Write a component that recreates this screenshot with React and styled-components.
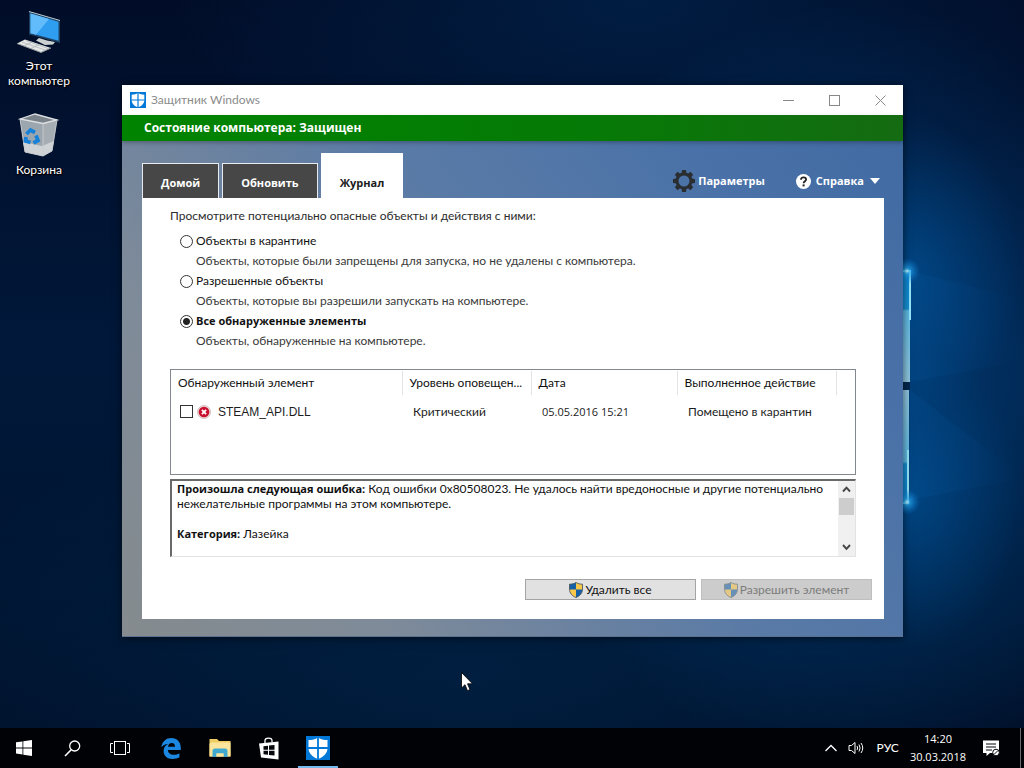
import { useState } from "react"
import styled, { createGlobalStyle, css } from "styled-components"

const GlobalStyle = createGlobalStyle`
    *{
        box-sizing: border-box;
    }
    body{
        margin: 0;
        font-family: Lato, "Noto Sans", sans-serif;
        font-size: 12px;
        line-height: 16px;
        color: #1c1c1c;
    }
    p, h1, h2{
        margin: 0;
        font-size: inherit;
        font-weight: inherit;
    }
    button{
        font: inherit;
        color: inherit;
        margin: 0;
        padding: 0;
        border: none;
        background: none;
    }
    svg{
        display: block;
        flex: none;
    }
`

const smallText = css`
    font-family: "Open Sans", "Noto Sans", sans-serif;
    font-size: 11px;
`

const Screen = styled.div`
    position: relative;
    min-height: 100vh;
    display: flex;
    flex-direction: column;
    overflow: hidden;
    background:
        radial-gradient(ellipse 110px 150px at 89% 35%, rgba(0,112,200,0.34), transparent),
        radial-gradient(ellipse 110px 150px at 89% 65%, rgba(0,112,200,0.34), transparent),
        radial-gradient(ellipse 360px 380px at 84% 50%, rgba(0,76,144,0.66), transparent),
        radial-gradient(ellipse 460px 200px at 62% 0%, rgba(0,40,84,0.6), transparent),
        radial-gradient(ellipse 620px 260px at 46% 88%, rgba(0,42,82,0.5), transparent),
        linear-gradient(180deg, #010d28 0%, #01183a 45%, #001531 80%, #010f28 100%);
`

const Wallpaper = styled.svg`
    position: absolute;
    inset: 0;
    width: 100%;
    height: 100%;
`

const Desktop = styled.main`
    position: relative;
    flex: 1;
    display: flex;
    align-items: flex-start;
`

const Shortcuts = styled.nav`
    width: 122px;
    display: flex;
    flex-direction: column;
    gap: 24px;
    padding: 8px 45px 0 1px;
`

const Shortcut = styled.a`
    display: flex;
    flex-direction: column;
    align-items: center;
    gap: 2px;
    color: #fff;
    line-height: 15px;
    text-align: center;
    text-decoration: none;
    text-shadow: 0 1px 2px #000, 1px 1px 1px #000;
`

const WindowFrame = styled.section`
    flex: 1;
    min-width: 0;
    margin: 85px 121px 24px 0;
    border-bottom: 1px solid #5a7190;
    background: linear-gradient(53deg, #858b8e 0%, #7f8b99 22%, #5b7ba6 52%, #4a72a8 78%, #4069a2 100%);
    box-shadow: 0 1px 8px rgba(0,0,0,0.6);
`

const TitleBar = styled.header`
    height: 30px;
    display: flex;
    align-items: center;
    padding-left: 8px;
    background: #fff;
    color: #8b8b8b;
    h1{
        flex: 1;
        padding-left: 5px;
    }
`

const CaptionButton = styled.button`
    width: 46px;
    height: 30px;
    display: flex;
    align-items: center;
    justify-content: center;
`

const StatusBar = styled.h2`
    height: 26px;
    padding: 0 22px;
    font-family: "Open Sans", "Noto Sans", sans-serif;
    line-height: 26px;
    font-weight: 700;
    color: #fff;
    background: linear-gradient(90deg, #008400 0%, #067a06 60%, #156b12 100%);
    box-shadow: 0 2px 4px rgba(0,0,0,0.25);
`

const WindowBody = styled.div`
    padding: 12px 19px 17px 20px;
`

const TopRow = styled.div`
    display: flex;
    justify-content: space-between;
`

const Tabs = styled.div`
    display: flex;
    align-items: flex-end;
    gap: 3px;
    height: 45px;
`

const Tab = styled.button`
    ${smallText}
    height: 35px;
    padding: 3px 18px 0;
    border: 1px solid #e8ecf0;
    border-bottom: none;
    background: #474747;
    color: #fff;
    font-weight: 700;
    ${props => props.$active && css`
        height: 45px;
        padding-top: 13px;
        border-color: #fff;
        border-radius: 1px 1px 0 0;
        background: #fff;
        color: #1c1c1c;
    `}
`

const Links = styled.div`
    display: flex;
    align-items: center;
    gap: 31px;
    padding: 11px 4px 0 0;
`

const LinkButton = styled.button`
    ${smallText}
    display: flex;
    align-items: center;
    gap: ${props => props.$gap}px;
    font-weight: 700;
    color: #fff;
`

const Panel = styled.div`
    padding: 10px 12px 19px 28px;
    background: #fff;
`

const Inner = styled.div`
    margin-right: 16px;
`

const Options = styled.fieldset`
    margin: 0 0 18px;
    padding: 0;
    border: none;
    legend{
        padding: 0;
        margin-bottom: 7px;
        color: #2c2c2c;
    }
`

const Option = styled.label`
    display: grid;
    grid-template-columns: 13px 1fr;
    column-gap: 3px;
    align-items: center;
    padding-left: 10px;
    line-height: 20px;
    color: #111;
    ${props => props.$checked && css`
        ${smallText}
        font-weight: 700;
    `}
`

const Hint = styled.small`
    grid-column: 2;
    font-family: Lato, "Noto Sans", sans-serif;
    font-size: 12px;
    font-weight: 400;
    color: #3a3a3a;
`

const Radio = styled.input`
    appearance: none;
    width: 13px;
    height: 13px;
    margin: 0;
    border: 1px solid #333;
    border-radius: 50%;
    background: #fff;
    &:checked{
        background: radial-gradient(circle, #222 3px, #fff 4px);
    }
`

const ListBox = styled.div`
    height: 106px;
    border: 1px solid #828790;
    padding-top: 1px;
    overflow: hidden;
`

const Table = styled.table`
    width: 100%;
    table-layout: fixed;
    border-collapse: collapse;
    th, td{
        padding: 0 7px;
        text-align: left;
        font-weight: 400;
        white-space: nowrap;
    }
    th{
        height: 24px;
        padding-right: 4px;
        border-right: 1px solid #e3e3e3;
        color: #111;
    }
    th:last-child{
        border: none;
    }
    td{
        height: 33px;
        padding-left: 11px;
    }
    td:first-child{
        padding-left: 9px;
    }
`

const DateText = styled.time`
    ${smallText}
`

const Item = styled.label`
    display: flex;
    align-items: center;
    gap: 4px;
    font-family: "Liberation Sans", Arial, sans-serif;
    span{
        padding-left: 3px;
    }
`

const CheckBox = styled.input`
    appearance: none;
    width: 13px;
    height: 13px;
    margin: 0;
    border: 1px solid #333;
    background: #fff;
    &:checked{
        background: #333;
        box-shadow: inset 0 0 0 2px #fff;
    }
`

const Details = styled.div`
    display: flex;
    height: 78px;
    margin-top: 4px;
    border: 1px solid #e3e3e3;
    border-top: 2px solid #696969;
    border-left: 2px solid #696969;
`

const DetailsText = styled.div`
    flex: 1;
    padding: 0 8px 0 5px;
    line-height: 15px;
    color: #111;
    p + p{
        margin-top: 15px;
    }
    b{
        ${smallText}
        line-height: 14px;
    }
`

const ScrollBar = styled.div`
    width: 17px;
    display: flex;
    flex-direction: column;
    background: #f0f0f0;
`

const ScrollButton = styled.button`
    height: 17px;
    display: flex;
    align-items: center;
    justify-content: center;
`

const Thumb = styled.div`
    height: 17px;
    margin: 0 1px auto;
    background: #cdcdcd;
`

const Actions = styled.div`
    display: flex;
    justify-content: flex-end;
    gap: 5px;
    margin-top: 22px;
`

const ActionButton = styled.button`
    width: 171px;
    height: 21px;
    display: flex;
    align-items: center;
    justify-content: center;
    gap: 2px;
    border: 1px solid #a4a4a4;
    background: #e1e1e1;
    color: #111;
    &:disabled{
        border-color: #bfbfbf;
        background: #cccccc;
        color: #7c7c7c;
    }
    &:disabled svg{
        opacity: 0.55;
    }
`

const TaskBar = styled.footer`
    position: relative;
    height: 40px;
    display: flex;
    justify-content: space-between;
    background: #010205;
    color: #fff;
`

const TaskGroup = styled.div`
    display: flex;
`

const TaskButton = styled.button`
    width: 49px;
    height: 40px;
    display: flex;
    align-items: center;
    justify-content: center;
    ${props => props.$system && css`
        width: 48px;
    `}
    ${props => props.$active && css`
        background: linear-gradient(#76b9ed, #76b9ed) center bottom / 40px 2px no-repeat;
    `}
`

const PinnedApps = styled(TaskGroup)`
    flex: 1;
    padding-left: 2px;
`

const Tray = styled.div`
    display: flex;
    align-items: center;
    gap: 11px;
    padding-right: 3px;
`

const Clock = styled.time`
    ${smallText}
    padding-right: 6px;
    line-height: 18px;
    text-align: center;
`

const TrayButton = styled.button`
    display: flex;
    align-items: center;
`

const ShowDesktop = styled.button`
    width: 1px;
    height: 40px;
    margin-left: 9px;
    background: #6b6b6b;
`

const DefenderIcon = ({ size }) => (
    <svg width={size} height={size} viewBox="0 0 24 24" aria-hidden="true">
        <rect width="24" height="24" fill="#0078d7"/>
        <path d="M12 1.500C9.300 3.400 6 4 2.500 4V12C2.500 17.500 6.500 21 12 23C17.500 21 21.500 17.500 21.500 12V4C18 4 14.700 3.400 12 1.500Z" fill="#fff"/>
        <path d="M12 1V24M2 12H22" stroke="#0078d7" strokeWidth="1.800"/>
    </svg>
)

const ComputerIcon = () => (
    <svg width="44" height="48" viewBox="0 0 44 48" aria-hidden="true">
        <path d="M22 30L30 32.500L38 34L36 36.500L28 37L19 32.500Z" fill="#cbd0d0"/>
        <path d="M12 3.500L43 12.500V35L12 26.500Z" fill="#1d3f5d"/>
        <path d="M12 3.500L43 12.500" stroke="#bccbd6"/>
        <path d="M13.500 5.500L41.500 13.700V32.800L13.500 25.300Z" fill="#2f9df0"/>
        <path d="M13.500 5.500L32 10.900L19 26.800L13.500 25.300Z" fill="#62bbfa"/>
        <path d="M0 35.500L8 31.500L34 40L24 44.500Z" fill="#e6e8e8"/>
        <path d="M0 35.500L24 44.500L34 40" stroke="#8b9296" fill="none"/>
        <path d="M5 34.200L29 42.300M9 32.600L31 40.500M7 38L15 34M14 40.500L22 36.500" stroke="#a9afb2" strokeWidth="0.700"/>
    </svg>
)

const BinIcon = () => (
    <svg width="42" height="48" viewBox="0 0 42 48" aria-hidden="true">
        <path d="M2 7L39 9L34 39L25 44L7 40Z" fill="#a6adb3"/>
        <path d="M2 7L25 11L25 44L7 40Z" fill="#9ca6ae"/>
        <path d="M5 30L24 34L36 29L34 39L25 44L7 40Z" fill="#d0d3d5"/>
        <path d="M2 7L17 2L39 8L25 11.500Z" fill="#7b838a" stroke="#dde0e2" strokeWidth="1.300"/>
        <path d="M2 7L7 40L25 44L34 39L39 8M25 11.500V44" fill="none" stroke="#c8cdd0" strokeWidth="0.900"/>
        <g fill="none" stroke="#1681d8" strokeWidth="3.800">
            <path d="M8.500 22L12.500 18L17 20.500"/>
            <path d="M18 23.500L20 28.500L15.500 31"/>
            <path d="M12.500 30.500L7.500 29L8 25"/>
        </g>
    </svg>
)

const GearIcon = () => (
    <svg width="22" height="22" viewBox="0 0 22 22" aria-hidden="true">
        <circle cx="11" cy="11" r="7" fill="none" stroke="#2b2e31" strokeWidth="3"/>
        {[0, 45, 90, 135, 180, 225, 270, 315].map(a => (
            <path key={a} d="M8.600 3.500L9 0H13L13.400 3.500Z" fill="#2b2e31" transform={`rotate(${a} 11 11)`}/>
        ))}
    </svg>
)

const HelpIcon = () => (
    <svg width="15" height="15" viewBox="0 0 15 15" aria-hidden="true">
        <circle cx="7.500" cy="7.500" r="7.500" fill="#fff"/>
        <path d="M5 5.700C5 4 6 3.300 7.500 3.300S10.100 4.100 10.100 5.500C10.100 7.200 7.600 7.300 7.600 9.300" fill="none" stroke="#222" strokeWidth="1.800"/>
        <rect x="6.600" y="10.400" width="2" height="2" fill="#222"/>
    </svg>
)

const ErrorIcon = () => (
    <svg width="14" height="14" viewBox="0 0 14 14" aria-hidden="true">
        <circle cx="7" cy="7" r="6.500" fill="#f1d6d6" stroke="#c9b0b0" strokeWidth="0.700"/>
        <circle cx="7" cy="7" r="5.300" fill="#c8102e"/>
        <path d="M4.900 4.900L9.100 9.100M9.100 4.900L4.900 9.100" stroke="#fff" strokeWidth="1.800"/>
    </svg>
)

const UacIcon = () => (
    <svg width="14" height="16" viewBox="0 0 14 16" aria-hidden="true">
        <path d="M7 0.500C5 1.800 3 2.200 0.500 2.200V7C0.500 11 3 14 7 15.500C11 14 13.500 11 13.500 7V2.200C11 2.200 9 1.800 7 0.500Z" fill="#f9c74a"/>
        <path d="M7 0.500C5 1.800 3 2.200 0.500 2.200V7.500H7Z" fill="#1660a8"/>
        <path d="M7 7.500H13.500C13.300 11.200 11 14 7 15.500Z" fill="#1660a8"/>
        <path d="M7 0.500C5 1.800 3 2.200 0.500 2.200V7C0.500 11 3 14 7 15.500C11 14 13.500 11 13.500 7V2.200C11 2.200 9 1.800 7 0.500Z" fill="none" stroke="#4c5a66" strokeWidth="0.900"/>
    </svg>
)

const Chevron = ({ down }) => (
    <svg width="9" height="7" viewBox="0 0 9 7" aria-hidden="true">
        <path d={down ? "M1 1L4.500 4.800L8 1" : "M1 5.500L4.500 1.700L8 5.500"} fill="none" stroke="#444" strokeWidth="1.900"/>
    </svg>
)

const StartIcon = () => (
    <svg width="16" height="16" viewBox="0 0 16 16" fill="#fff" aria-hidden="true">
        <path d="M0 2.300L6.500 1.400V7.500H0ZM7.300 1.300L16 0V7.500H7.300ZM0 8.400H6.500V14.500L0 13.600ZM7.300 8.400H16V16L7.300 14.700Z"/>
    </svg>
)

const SearchIcon = () => (
    <svg width="17" height="17" viewBox="0 0 17 17" fill="none" stroke="#fff" aria-hidden="true">
        <circle cx="10.700" cy="6" r="5" strokeWidth="1.300"/>
        <path d="M7.200 9.700L1 16" strokeWidth="1.600"/>
    </svg>
)

const TaskViewIcon = () => (
    <svg width="20" height="14" viewBox="0 0 20 14" fill="none" stroke="#fff" aria-hidden="true">
        <rect x="4.500" y="0.500" width="11" height="13"/>
        <path d="M3 2.500H0.500V11.500H3M17 2.500H19.500V11.500H17"/>
    </svg>
)

const EdgeIcon = () => (
    <svg width="20" height="21" viewBox="0 0 20 21" aria-hidden="true">
        <path d="M0.300 9.300C1.200 3.300 5.300 0 10.300 0C16 0 19.800 4 19.800 9.700V12H6.900C7 15 9.400 16.800 12.700 16.800C14.900 16.800 16.700 16.200 18.400 15.200V19.300C16.500 20.400 14.300 21 11.700 21C6 21 2.600 17.700 2.600 13C2.600 9.900 4.200 7.400 7 6C4.100 6.300 1.800 7.400 0.300 9.300ZM7 8.700H14C14 6.300 12.900 4.900 10.700 4.900C8.600 4.900 7.300 6.400 7 8.700Z" fill="#1b87e0"/>
    </svg>
)

const FolderIcon = () => (
    <svg width="22" height="20" viewBox="0 0 22 20" aria-hidden="true">
        <path d="M0.500 1H8L10 3H21.500V18.500H0.500Z" fill="#f0cd62"/>
        <path d="M1.500 4.500H21.500V18.500H0.500V6Z" fill="#fbe49c"/>
        <path d="M3.500 19V13Q3.500 10.500 6 10.500H16Q18.500 10.500 18.500 13V19H14.500V15.500H7.500V19Z" fill="#3fa9d0"/>
        <path d="M7.500 15.500H14.500V18.500H7.500Z" fill="#fbe49c"/>
    </svg>
)

const StoreIcon = () => (
    <svg width="20" height="23" viewBox="0 0 20 23" aria-hidden="true">
        <path d="M6 6V3.500C6 0.500 13 0 13 3.500V5" fill="none" stroke="#fff" strokeWidth="1.300"/>
        <path d="M0 6.500L19.500 4.500V22.500L2 20.500Z" fill="#fff"/>
        <path d="M4.500 9.200L9 8.700V12.700H4.500ZM10 8.600L15.500 8V12.700H10ZM4.500 13.700H9V17.800L4.500 17.300ZM10 13.700H15.500V18.500L10 17.900Z" fill="#06080c"/>
    </svg>
)

const SpeakerIcon = () => (
    <svg width="17" height="14" viewBox="0 0 17 14" fill="none" stroke="#fff" aria-hidden="true">
        <path d="M1 4.500H3.500L7 1.500V12.500L3.500 9.500H1Z"/>
        <path d="M9 5Q10.300 7 9 9M11 3.500Q13.200 7 11 10.500M13 2Q16.500 7 13 12"/>
    </svg>
)

const NoticeIcon = () => (
    <svg width="17" height="17" viewBox="0 0 17 17" aria-hidden="true">
        <path d="M0 0.500H16V13H7L3.500 16V13H0Z" fill="#fff"/>
        <path d="M3 4H13M3 7H13M3 10H9" stroke="#05070b" strokeWidth="1.200"/>
        <circle cx="13" cy="12.500" r="3.300" fill="#fff" stroke="#05070b"/>
        <path d="M11 14.500L15 10.500" stroke="#05070b"/>
    </svg>
)

const Cursor = styled.svg`
    position: absolute;
    left: 45%;
    bottom: 76px;
`

const options = [
    { id: "quarantine", title: "Объекты в карантине", text: "Объекты, которые были запрещены для запуска, но не удалены с компьютера." },
    { id: "allowed", title: "Разрешенные объекты", text: "Объекты, которые вы разрешили запускать на компьютере." },
    { id: "all", title: "Все обнаруженные элементы", text: "Объекты, обнаруженные на компьютере." },
]

const tabs = ["Домой", "Обновить", "Журнал"]

function Backdrop() {
    return (
        <Wallpaper viewBox="0 0 1024 768" preserveAspectRatio="xMidYMid slice" aria-hidden="true">
            <defs>
                <linearGradient id="beam" x1="0" x2="1">
                    <stop offset="0" stopColor="#0b75cc" stopOpacity="0.100"/>
                    <stop offset="1" stopColor="#0b75cc" stopOpacity="0"/>
                </linearGradient>
                <linearGradient id="pane" x1="0" x2="0" y1="0" y2="1">
                    <stop offset="0" stopColor="#0a84d0"/>
                    <stop offset="0.340" stopColor="#168fd2"/>
                    <stop offset="0.360" stopColor="#5cb8e2"/>
                    <stop offset="1" stopColor="#8fc4dc"/>
                </linearGradient>
                <radialGradient id="flare">
                    <stop offset="0" stopColor="#b9f4ff"/>
                    <stop offset="0.250" stopColor="#25a9f0" stopOpacity="0.700"/>
                    <stop offset="1" stopColor="#0b75cc" stopOpacity="0"/>
                </radialGradient>
            </defs>
            <path d="M910 271L1024 300V360L910 382Z" fill="url(#beam)"/>
            <path d="M910 390L1024 478L910 500Z" fill="url(#beam)"/>
            <rect x="890" y="271" width="20" height="111" fill="url(#pane)"/>
            <rect x="890" y="382" width="20" height="8" fill="#01284e"/>
            <rect x="890" y="390" width="19" height="112" fill="url(#pane)" transform="matrix(1 0 0 -1 0 892)"/>
            <path d="M900 271H910V320M908 450V503H900" fill="none" stroke="#93e6fb" strokeWidth="2"/>
            <circle cx="907" cy="271" r="13" fill="url(#flare)"/>
            <circle cx="907" cy="502" r="13" fill="url(#flare)"/>
        </Wallpaper>
    )
}

function DefenderWindow() {
    const [tab, setTab] = useState("Журнал")
    const [selected, setSelected] = useState("all")

    return (
        <WindowFrame>
            <TitleBar>
                <DefenderIcon size={16}/>
                <h1>Защитник Windows</h1>
                <CaptionButton aria-label="Свернуть">
                    <svg width="11" height="11" viewBox="0 0 11 11" stroke="#888"><path d="M0 5.500H11"/></svg>
                </CaptionButton>
                <CaptionButton aria-label="Развернуть">
                    <svg width="11" height="11" viewBox="0 0 11 11" stroke="#888" fill="none"><rect x="0.500" y="0.500" width="10" height="10"/></svg>
                </CaptionButton>
                <CaptionButton aria-label="Закрыть">
                    <svg width="11" height="11" viewBox="0 0 11 11" stroke="#888"><path d="M0.500 0.500L10.500 10.500M10.500 0.500L0.500 10.500"/></svg>
                </CaptionButton>
            </TitleBar>
            <StatusBar>Состояние компьютера: Защищен</StatusBar>
            <WindowBody>
                <TopRow>
                    <Tabs>
                        {tabs.map(name => (
                            <Tab key={name} $active={name === tab} onClick={() => setTab(name)}>{name}</Tab>
                        ))}
                    </Tabs>
                    <Links>
                        <LinkButton $gap={3}><GearIcon/>Параметры</LinkButton>
                        <LinkButton $gap={5}>
                            <HelpIcon/>
                            Справка
                            <svg width="11" height="6" viewBox="0 0 11 6" aria-hidden="true"><path d="M1 0H11L6 6Z" fill="#fff"/></svg>
                        </LinkButton>
                    </Links>
                </TopRow>
                <Panel>
                    <Inner>
                        <Options>
                            <legend>Просмотрите потенциально опасные объекты и действия с ними:</legend>
                            {options.map(o => (
                                <Option key={o.id} $checked={o.id === selected}>
                                    <Radio type="radio" name="history" checked={o.id === selected} onChange={() => setSelected(o.id)}/>
                                    {o.title}
                                    <Hint>{o.text}</Hint>
                                </Option>
                            ))}
                        </Options>
                        <ListBox>
                            <Table>
                                <colgroup>
                                    <col width="231"/>
                                    <col width="129"/>
                                    <col width="146"/>
                                    <col width="159"/>
                                    <col/>
                                </colgroup>
                                <thead>
                                    <tr>
                                        <th>Обнаруженный элемент</th>
                                        <th>Уровень оповещен...</th>
                                        <th>Дата</th>
                                        <th>Выполненное действие</th>
                                        <th></th>
                                    </tr>
                                </thead>
                                <tbody>
                                    <tr>
                                        <td>
                                            <Item>
                                                <CheckBox type="checkbox"/>
                                                <ErrorIcon/>
                                                <span>STEAM_API.DLL</span>
                                            </Item>
                                        </td>
                                        <td>Критический</td>
                                        <td><DateText>05.05.2016 15:21</DateText></td>
                                        <td>Помещено в карантин</td>
                                        <td></td>
                                    </tr>
                                </tbody>
                            </Table>
                        </ListBox>
                        <Details>
                            <DetailsText>
                                <p><b>Произошла следующая ошибка:</b> Код ошибки 0x80508023. Не удалось найти вредоносные и другие потенциально нежелательные программы на этом компьютере.</p>
                                <p><b>Категория:</b> Лазейка</p>
                            </DetailsText>
                            <ScrollBar>
                                <ScrollButton aria-label="Вверх"><Chevron/></ScrollButton>
                                <Thumb/>
                                <ScrollButton aria-label="Вниз"><Chevron down/></ScrollButton>
                            </ScrollBar>
                        </Details>
                    </Inner>
                    <Actions>
                        <ActionButton><UacIcon/>Удалить все</ActionButton>
                        <ActionButton disabled><UacIcon/>Разрешить элемент</ActionButton>
                    </Actions>
                </Panel>
            </WindowBody>
        </WindowFrame>
    )
}

export default function App() {
    return (
        <Screen>
            <GlobalStyle/>
            <Backdrop/>
            <Desktop>
                <Shortcuts>
                    <Shortcut href="#computer"><ComputerIcon/>Этот компьютер</Shortcut>
                    <Shortcut href="#bin"><BinIcon/>Корзина</Shortcut>
                </Shortcuts>
                <DefenderWindow/>
            </Desktop>
            <TaskBar>
                <TaskGroup>
                    <TaskButton $system aria-label="Пуск"><StartIcon/></TaskButton>
                    <TaskButton $system aria-label="Поиск"><SearchIcon/></TaskButton>
                    <TaskButton $system aria-label="Представление задач"><TaskViewIcon/></TaskButton>
                </TaskGroup>
                <PinnedApps>
                    <TaskButton aria-label="Edge"><EdgeIcon/></TaskButton>
                    <TaskButton aria-label="Проводник"><FolderIcon/></TaskButton>
                    <TaskButton aria-label="Магазин"><StoreIcon/></TaskButton>
                    <TaskButton $active aria-label="Защитник Windows"><DefenderIcon size={24}/></TaskButton>
                </PinnedApps>
                <Tray>
                    <TrayButton aria-label="Скрытые значки">
                        <svg width="12" height="8" viewBox="0 0 12 8" fill="none" stroke="#fff" strokeWidth="1.300"><path d="M0.500 7L6 1.500L11.500 7"/></svg>
                    </TrayButton>
                    <TrayButton aria-label="Громкость"><SpeakerIcon/></TrayButton>
                    <TrayButton>РУС</TrayButton>
                    <Clock>14:20<br/>30.03.2018</Clock>
                    <TrayButton aria-label="Центр уведомлений"><NoticeIcon/></TrayButton>
                    <ShowDesktop aria-label="Свернуть все окна"/>
                </Tray>
            </TaskBar>
            <Cursor width="12" height="20" viewBox="0 0 12 20" aria-hidden="true">
                <path d="M0.500 0.500V16L4 12.700L6.500 18.700L9 17.600L6.500 11.800H11.500Z" fill="#fff" stroke="#000" strokeWidth="0.800"/>
            </Cursor>
        </Screen>
    )
}
